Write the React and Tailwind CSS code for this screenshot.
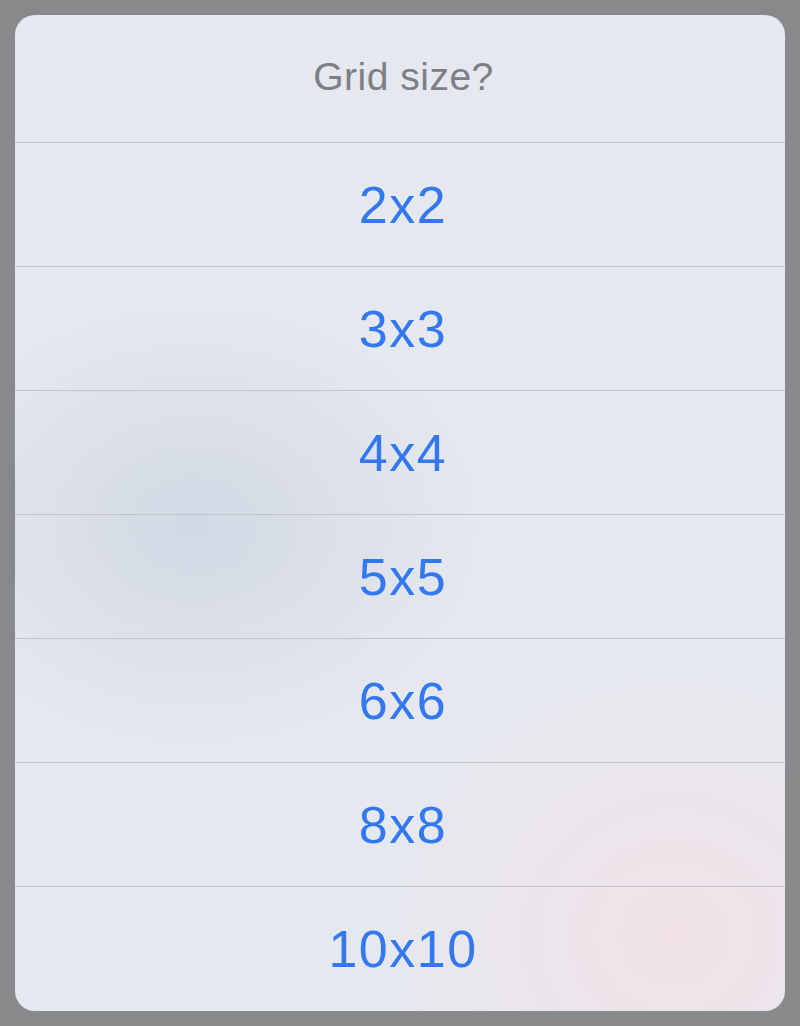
const sizes = ["2x2", "3x3", "4x4", "5x5", "6x6", "8x8", "10x10"];

const App = () => {
  return (
    <div className="h-[1026px] w-[800px] bg-[#88898b] p-[15px] font-['Liberation_Sans',sans-serif]">
      <div className="h-[996px] w-[770px] overflow-hidden rounded-[20px] bg-[#e5e8ef] bg-[radial-gradient(ellipse_300px_230px_at_180px_510px,#d2d9e4,transparent),radial-gradient(ellipse_300px_280px_at_660px_920px,#f0e2e7,transparent)]">
        <div className="flex h-[127px] items-center justify-center pl-[7px]">
          <p className="text-[39px] tracking-[0.5px] text-[#7c7f85] -mt-[2px]">Grid size?</p>
        </div>
        {sizes.map((s) => (
          <button
            key={s}
            className="flex h-[124px] w-full items-center justify-center border-t border-[#c2c5ca] pl-[6px] text-[52px] tracking-[1.5px] text-[#3478f0] cursor-pointer"
          >
            {s}
          </button>
        ))}
      </div>
    </div>
  );
};

export default App;
